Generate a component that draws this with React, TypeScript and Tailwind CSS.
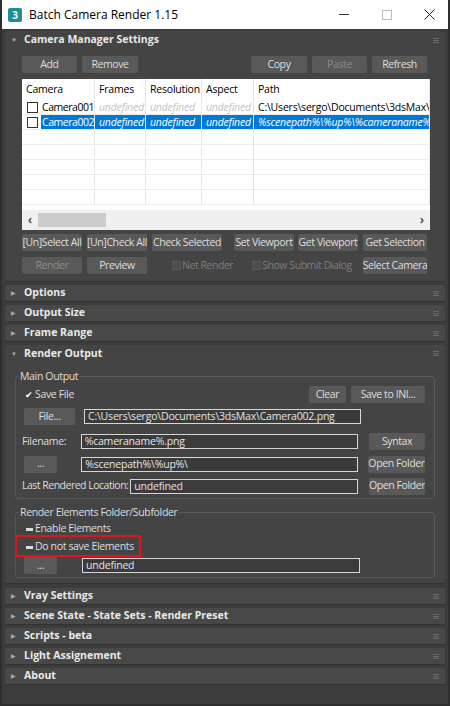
import React from 'react';

const font = { fontFamily: '"Open Sans", "Noto Sans", "Liberation Sans", sans-serif' };

function Btn({ w, children, disabled }: { w: string; children: React.ReactNode; disabled?: boolean }) {
  return (
    <div
      className={`${w} h-[17px] shrink-0 rounded-[2px] bg-[#595959] flex items-center justify-center text-[10.5px] tracking-[-0.4px] whitespace-nowrap overflow-hidden ${
        disabled ? 'text-[#8a8a8a]' : 'text-[#dedede]'
      }`}
    >
      {children}
    </div>
  );
}

function Field({ w, children }: { w: string; children: React.ReactNode }) {
  return (
    <div className={`${w} h-[15px] shrink-0 border border-[#d6d6d6] bg-[#3b3b3b] text-[#e4e4e4] text-[10.5px] tracking-[-0.2px] leading-[13px] px-[3px] whitespace-nowrap overflow-hidden`}>
      {children}
    </div>
  );
}

function Grip() {
  return (
    <div className="flex flex-col gap-[1px] mr-[6px]">
      <div className="w-[6px] h-[1px] bg-[#6a6a6a]" />
      <div className="w-[6px] h-[1px] bg-[#6a6a6a]" />
      <div className="w-[6px] h-[1px] bg-[#6a6a6a]" />
    </div>
  );
}

function Header({ title, open, h }: { title: string; open?: boolean; h: string }) {
  return (
    <div className={`${h} flex items-center`}>
      <span className="w-[19px] pl-[6px] text-[6px] text-[#a8a8a8] leading-none">{open ? '▼' : '▶'}</span>
      <span className="flex-1 font-bold text-[10.5px] text-[#e8e8e8] whitespace-nowrap">{title}</span>
      <Grip />
    </div>
  );
}

function Closed({ title, mt = 'mt-[3px]' }: { title: string; mt?: string }) {
  return (
    <div className={`mx-[3px] ${mt} bg-[#484848] rounded-[2px] border-b border-[#333] shrink-0`}>
      <Header title={title} h="h-[16px]" />
    </div>
  );
}

function Check({ label, disabled }: { label: string; disabled?: boolean }) {
  return (
    <div className={`flex items-center text-[10.5px] tracking-[-0.45px] whitespace-nowrap ${disabled ? 'text-[#7c7c7c]' : 'text-[#dedede]'}`}>
      <div className="w-[9px] h-[9px] bg-[#4e4e4e] border border-[#555] mr-[1px]" />
      {label}
    </div>
  );
}

const cols = ['w-[73px]', 'w-[51px]', 'w-[56px]', 'w-[52px]', 'flex-1'];

function Row({ sel, cells }: { sel?: boolean; cells: string[] }) {
  const empty = cells[0] === '';
  return (
    <div className="h-[15px] flex border-b border-[#ececec] text-[10.5px] tracking-[-0.2px] leading-[14px] shrink-0">
      {cells.map((c, i) => (
        <div
          key={i}
          className={`${cols[i]} shrink-0 border-r border-[#e6e6e6] overflow-hidden whitespace-nowrap flex items-center ${
            sel && i > 0 ? 'bg-[#0078d7] text-white italic' : i === 4 ? 'text-black' : 'text-[#c4c4c4] italic'
          }`}
        >
          {i === 0 ? (
            empty ? null : (
              <>
                <div className="ml-[5px] w-[11px] h-[11px] border border-[#333] bg-white shrink-0" />
                <span className={`ml-[3px] pl-[1px] flex-1 not-italic tracking-[-0.45px] ${sel ? 'bg-[#0078d7] text-white' : 'text-black'}`}>{c}</span>
              </>
            )
          ) : (
            <span className="px-[4px]">{c}</span>
          )}
        </div>
      ))}
    </div>
  );
}

export default function App() {
  return (
    <div style={font} className="w-[450px] h-[706px] bg-[#3c3c3c] flex flex-col border-l-2 border-r-2 border-b-2 border-[#2e2e2e] overflow-hidden">
      {/* title bar */}
      <div className="h-[29px] bg-white flex items-center shrink-0">
        <div className="ml-[6px] w-[14px] h-[14px] bg-[#1b8f9a] rounded-[2px] flex items-center justify-center text-[10px] font-bold text-white leading-none">3</div>
        <span className="ml-[7px] text-[12px] text-black">Batch Camera Render 1.15</span>
        <div className="flex-1" />
        <div className="w-[10px] h-[1px] bg-[#333] mr-[33px]" />
        <div className="w-[10px] h-[10px] border border-[#bbb] mr-[32px]" />
        <svg width="11" height="11" viewBox="0 0 11 11" className="mr-[13px]">
          <path d="M0.5 0.5L10.5 10.5M10.5 0.5L0.5 10.5" stroke="#222" strokeWidth="1" />
        </svg>
      </div>

      {/* Camera Manager Settings */}
      <div className="mx-[3px] mt-[2px] bg-[#444] rounded-[2px] border-b border-[#333] shrink-0">
        <Header title="Camera Manager Settings" open h="h-[18px]" />
        <div className="pl-[17px] pt-[7px] pb-[7px]">
          <div className="flex">
            <Btn w="w-[55px]">Add</Btn>
            <div className="w-[5px]" />
            <Btn w="w-[56px]">Remove</Btn>
            <div className="w-[113px]" />
            <Btn w="w-[56px]">Copy</Btn>
            <div className="w-[5px]" />
            <Btn w="w-[55px]" disabled>Paste</Btn>
            <div className="w-[5px]" />
            <Btn w="w-[55px]">Refresh</Btn>
          </div>
          {/* table */}
          <div className="mt-[6px] w-[408px] h-[151px] bg-white flex flex-col overflow-hidden">
            <div className="h-[21px] flex text-[10.5px] tracking-[-0.2px] text-black shrink-0">
              {['Camera', 'Frames', 'Resolution', 'Aspect', 'Path'].map((h, i) => (
                <div key={h} className={`${cols[i]} shrink-0 border-r border-[#e6e6e6] flex items-center px-[4px]`}>{h}</div>
              ))}
            </div>
            <Row cells={['Camera001', 'undefined', 'undefined', 'undefined', 'C:\\Users\\sergo\\Documents\\3dsMax\\sc']} />
            <Row sel cells={['Camera002', 'undefined', 'undefined', 'undefined', '%scenepath%\\%up%\\%cameraname%.p']} />
            {[0, 1, 2, 3, 4].map((k) => (
              <Row key={k} cells={['', '', '', '', '']} />
            ))}
            <div className="flex-1" />
            <div className="h-[20px] bg-[#f0f0f0] flex items-center shrink-0">
              <span className="w-[16px] text-center text-[12px] text-[#555] font-bold">‹</span>
              <div className="w-[68px] h-[14px] bg-[#cdcdcd]" />
              <div className="flex-1" />
              <span className="w-[16px] text-center text-[12px] text-[#555] font-bold">›</span>
            </div>
          </div>
          <div className="flex mt-[4px]">
            <Btn w="w-[60px]">[Un]Select All</Btn>
            <div className="w-[5px]" />
            <Btn w="w-[60px]">[Un]Check All</Btn>
            <div className="w-[5px]" />
            <Btn w="w-[70px]">Check Selected</Btn>
            <div className="w-[12px]" />
            <Btn w="w-[60px]">Set Viewport</Btn>
            <div className="w-[4px]" />
            <Btn w="w-[60px]">Get Viewport</Btn>
            <div className="w-[5px]" />
            <Btn w="w-[64px]">Get Selection</Btn>
          </div>
          <div className="flex items-center mt-[6px]">
            <Btn w="w-[60px]" disabled>Render</Btn>
            <div className="w-[5px]" />
            <Btn w="w-[60px]">Preview</Btn>
            <div className="w-[25px]" />
            <Check label="Net Render" disabled />
            <div className="w-[19px]" />
            <Check label="Show Submit Dialog" disabled />
            <div className="flex-1" />
            <div className="mr-[18px]"><Btn w="w-[64px]">Select Camera</Btn></div>
          </div>
        </div>
      </div>

      <Closed title="Options" />
      <Closed title="Output Size" />
      <Closed title="Frame Range" />

      {/* Render Output */}
      <div className="mx-[3px] mt-[3px] bg-[#444] rounded-[2px] border-b border-[#333] shrink-0">
        <Header title="Render Output" open h="h-[17px]" />
        <div className="px-[10px] pt-[14px] pb-[5px] text-[10.5px] tracking-[-0.35px] text-[#dedede]">
          {/* Main Output */}
          <div className="relative border border-[#575757] rounded-[3px] pl-[8px] pr-[9px] pb-[4px]">
            <span className="absolute -top-[9px] left-[3px] bg-[#444] px-[1px] leading-[16px]">Main Output</span>
            <div className="flex items-center mt-[9px] h-[17px]">
              <div className="w-[9px] h-[9px] flex items-center justify-center text-[9px] text-white leading-none mr-[2px]">✔</div>
              <span>Save File</span>
              <div className="flex-1" />
              <Btn w="w-[37px]">Clear</Btn>
              <div className="w-[5px]" />
              <Btn w="w-[74px]">Save to INI...</Btn>
            </div>
            <div className="flex items-center mt-[5px] h-[17px]">
              <Btn w="w-[51px]">File...</Btn>
              <div className="w-[9px]" />
              <Field w="w-[277px]">C:\Users\sergo\Documents\3dsMax\Camera002.png</Field>
            </div>
            <div className="flex items-center mt-[8px] h-[17px]">
              <span className="w-[60px] -ml-[2px] mr-[2px] whitespace-nowrap">Filename:</span>
              <Field w="w-[277px]">%cameraname%.png</Field>
              <div className="w-[12px]" />
              <Btn w="w-[56px]">Syntax</Btn>
            </div>
            <div className="flex items-center mt-[5px] h-[18px]">
              <Btn w="w-[33px]">...</Btn>
              <div className="w-[27px]" />
              <Field w="w-[277px]">%scenepath%\%up%\</Field>
              <div className="w-[11px]" />
              <Btn w="w-[57px]">Open Folder</Btn>
            </div>
            <div className="flex items-center mt-[5px] h-[16px]">
              <span className="w-[112px] -ml-[2px] whitespace-nowrap tracking-[-0.5px]">Last Rendered Location:</span>
              <Field w="w-[228px]">undefined</Field>
              <div className="w-[11px]" />
              <Btn w="w-[56px]">Open Folder</Btn>
            </div>
          </div>
          {/* Render Elements */}
          <div className="relative border border-[#575757] rounded-[3px] mt-[13px] pl-[8px] pr-[9px] pb-[3px]">
            <span className="absolute -top-[9px] left-[3px] bg-[#444] px-[1px] leading-[16px] whitespace-nowrap">Render Elements Folder/Subfolder</span>
            <div className="flex items-center mt-[8px] h-[16px]">
              <div className="w-[7px] h-[3px] bg-[#dcdcdc] ml-[2px] mr-[2px]" />
              <span>Enable Elements</span>
            </div>
            <div className="relative flex items-center mt-[2px] h-[16px]">
              <div className="w-[7px] h-[3px] bg-[#dcdcdc] ml-[2px] mr-[2px]" />
              <span>Do not save Elements</span>
              <div className="absolute -left-[9px] -top-[4px] w-[126px] h-[22px] border-2 border-[#e0141c]" />
            </div>
            <div className="flex items-center mt-[2px] h-[17px]">
              <Btn w="w-[33px]">...</Btn>
              <div className="w-[25px]" />
              <Field w="w-[278px]">undefined</Field>
            </div>
          </div>
        </div>
      </div>

      <Closed title="Vray Settings" mt="mt-[4px]" />
      <Closed title="Scene State - State Sets - Render Preset" />
      <Closed title="Scripts - beta" />
      <Closed title="Light Assignement" />
      <Closed title="About" />
    </div>
  );
}
